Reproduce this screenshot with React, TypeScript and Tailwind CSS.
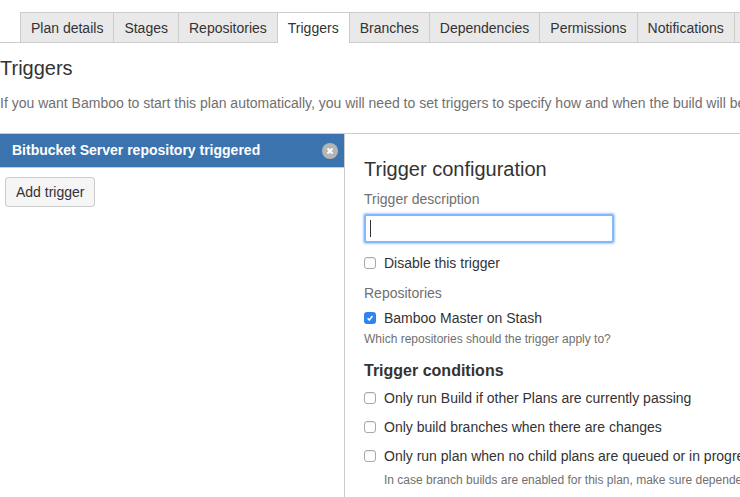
const tabs = ['Plan details', 'Stages', 'Repositories', 'Triggers', 'Branches', 'Dependencies', 'Permissions', 'Notifications'];
const conditions = [
  'Only run Build if other Plans are currently passing',
  'Only build branches when there are changes',
  'Only run plan when no child plans are queued or in progress',
];

function Box({ checked = false }: { checked?: boolean }) {
  if (checked) {
    return (
      <span className="w-[12px] h-[12px] shrink-0 rounded-[3px] bg-[#2d83f0] flex items-center justify-center">
        <svg width="10" height="10" viewBox="0 0 10 10" fill="none">
          <path d="M2.6 5.2 L4.3 7 L7.5 3" stroke="white" strokeWidth="1.5" />
        </svg>
      </span>
    );
  }
  return <span className="w-[12px] h-[12px] shrink-0 rounded-[3px] border border-[#a9a9a9] bg-white shadow-[inset_0_1px_1px_rgba(0,0,0,0.08)]" />;
}

export default function App() {
  return (
    <div className="w-[740px] h-[497px] overflow-hidden bg-white text-[14px] leading-[20px] text-[#333] font-['Liberation_Sans',Arial,sans-serif]">
      {/* Tabs */}
      <div className="h-[43px] pt-[12px] pl-[20px] flex border-b border-[#ccc] whitespace-nowrap">
        {tabs.map((t) => (
          <div
            key={t}
            className={
              t === 'Triggers'
                ? 'h-[31px] px-[10px] border border-b-0 border-[#ccc] border-l-0 bg-white flex items-center'
                : 'h-[30px] px-[10px] border border-l-0 border-b-0 first:border-l border-[#ccc] bg-[#e9e9e9] flex items-center'
            }
          >
            {t}
          </div>
        ))}
        <div className="w-[20px] h-[30px] border-t border-[#ccc] bg-[#e9e9e9] shrink-0" />
      </div>

      <h1 className="text-[20px] leading-[24px] mt-[13px] whitespace-nowrap">Triggers</h1>
      <p className="mt-[13px] text-[#707070] whitespace-nowrap">
        If you want Bamboo to start this plan automatically, you will need to set triggers to specify how and when the build will be
      </p>

      <div className="mt-[20px] flex border-t border-[#ccc] h-[364px]">
        {/* Left column */}
        <div className="w-[344px] shrink-0">
          <div className="h-[34px] bg-[#3b73af] border-b border-[#ccc] pl-[12px] pr-[6px] flex items-center justify-between text-white font-bold">
            <span className="-mt-[1px]">Bitbucket Server repository triggered</span>
            <span className="w-[16px] h-[16px] rounded-full bg-[#b5b5b5] flex items-center justify-center">
              <svg width="8" height="8" viewBox="0 0 8 8" fill="none">
                <path d="M1.5 1.5 L6.5 6.5 M6.5 1.5 L1.5 6.5" stroke="white" strokeWidth="2" />
              </svg>
            </span>
          </div>
          <button className="ml-[5px] mt-[9px] h-[30px] px-[10px] border border-[#ccc] rounded-[3px] bg-[#f5f5f5]">
            Add trigger
          </button>
        </div>

        {/* Right column */}
        <div className="flex-1 border-l border-[#ccc] pl-[19px] whitespace-nowrap">
          <h2 className="text-[20px] leading-[24px] mt-[23px]">Trigger configuration</h2>
          <div className="mt-[8px] text-[#707070]">Trigger description</div>
          <div className="mt-[5px] w-[250px] h-[29px] border-2 border-[#82b9fb] rounded-[2px] shadow-[0_0_2px_1px_rgba(130,185,251,0.7)] flex items-center pl-[4px]">
            <span className="w-[1px] h-[17px] bg-[#333]" />
          </div>
          <label className="mt-[10px] flex items-center gap-[8px]">
            <Box />
            Disable this trigger
          </label>
          <div className="mt-[10px] text-[#707070]">Repositories</div>
          <label className="mt-[5px] flex items-center gap-[8px]">
            <Box checked />
            Bamboo Master on Stash
          </label>
          <div className="mt-[1px] text-[12px] leading-[20px] text-[#707070]">Which repositories should the trigger apply to?</div>
          <h3 className="mt-[12px] text-[16px] leading-[20px] font-bold">Trigger conditions</h3>
          <div className="mt-[7px] flex flex-col gap-[9px]">
            {conditions.map((c) => (
              <label key={c} className="flex items-center gap-[8px]">
                <Box />
                {c}
              </label>
            ))}
          </div>
          <div className="mt-[4px] ml-[20px] text-[12px] leading-[20px] text-[#707070]">
            In case branch builds are enabled for this plan, make sure dependencies are also set
          </div>
        </div>
      </div>
    </div>
  );
}
